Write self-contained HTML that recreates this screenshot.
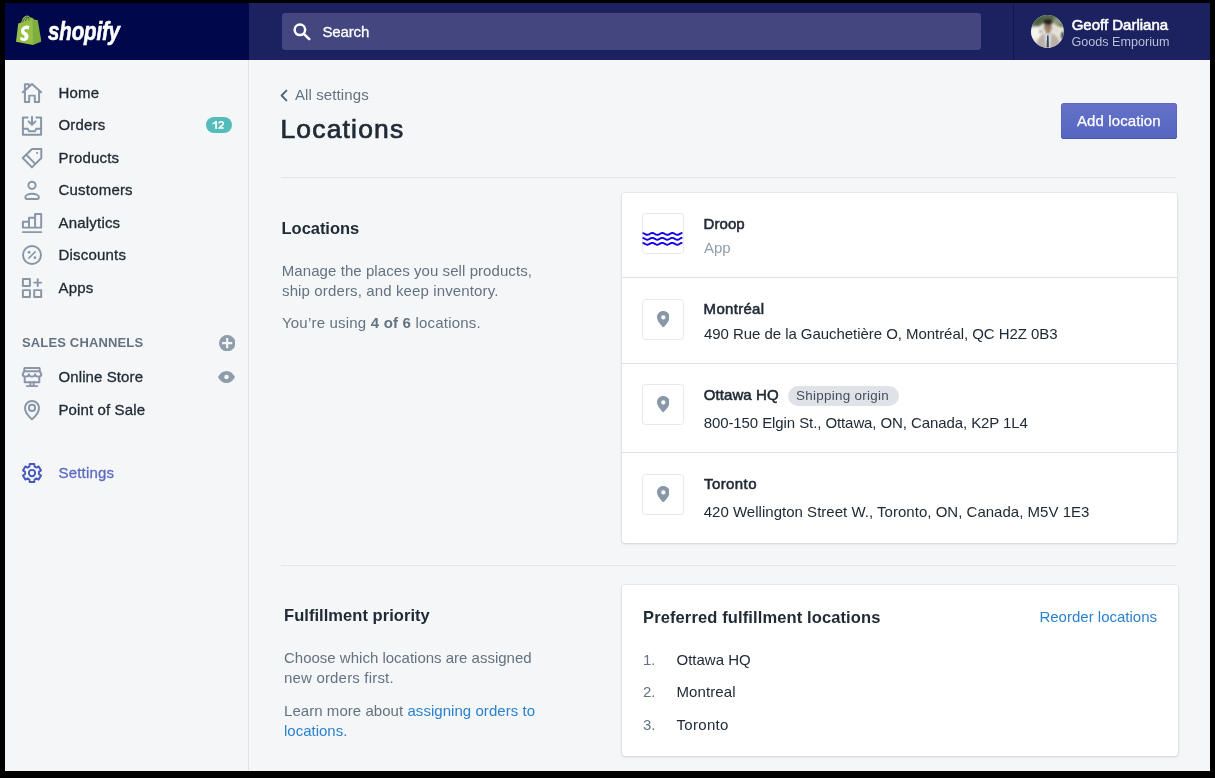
<!DOCTYPE html>
<html>
<head>
<meta charset="utf-8">
<title>Locations</title>
<style>
*{box-sizing:border-box;margin:0;padding:0}
html,body{width:1215px;height:778px;overflow:hidden;background:#000}
body{font-family:"Liberation Sans",sans-serif;color:#212b36;position:relative;font-size:15px}
.abs{position:absolute}
#frame{position:absolute;left:5px;top:3px;width:1205px;height:768px;background:#f4f6f8;overflow:hidden}
/* everything inside frame positioned in page coords via offset wrapper */
#page{will-change:transform;position:absolute;left:-5px;top:-3px;width:1215px;height:778px}
#topL{left:5px;top:3px;width:244px;height:57px;background:#00084b}
#topR{left:249px;top:3px;width:961px;height:57px;background:#1c2260}
#search{left:282px;top:13px;width:699px;height:37px;background:#43467f;border-radius:3px}
#userdiv{left:1013px;top:3px;width:1px;height:57px;background:#11164d}
#sidebar{left:5px;top:60px;width:244px;height:711px;background:#f4f6f8;border-right:1px solid #e1e5e9}
.t{position:absolute;white-space:nowrap;line-height:20px}
.nav{left:58.5px;font-size:15px;color:#212b36;letter-spacing:.2px}
.sub{color:#637381}
.card{position:absolute;background:#fff;border-radius:3px;box-shadow:0 0 0 1px rgba(63,63,68,.05),0 1px 3px 0 rgba(63,63,68,.15)}
.hr{position:absolute;height:1px;background:#dfe3e8}
.ibox{position:absolute;width:41.4px;height:40.8px;border:1.3px solid #e6e9ec;border-radius:3.5px;background:#fff}
.h2{font-size:16.5px;color:#212b36;font-weight:bold}
.b{font-weight:bold}
a{color:#2a82ce;text-decoration:none}

.ic{position:absolute;width:20px;height:20px;overflow:visible}
.ic *{fill:none;stroke:#8896a7;stroke-width:1.95;stroke-linecap:round;stroke-linejoin:round}
.ic .f{fill:#8896a7;stroke:none}
.nav,.med{-webkit-text-stroke:.3px currentColor}
.sb{-webkit-text-stroke:.55px currentColor}
#gear *{stroke:#4858bb}
</style>
</head>
<body>
<div id="frame"><div id="page">

<!-- top bar -->
<div id="topL" class="abs"></div>
<div id="topR" class="abs"></div>
<div id="search" class="abs"></div>
<div id="userdiv" class="abs"></div>
<div class="t med" style="left:322.5px;top:22px;font-size:15px;color:#fff;letter-spacing:-.15px">Search</div>
<div class="t sb" style="left:1071.7px;top:15px;font-size:15px;color:#fff">Geoff Darliana</div>
<div class="t" style="left:1071.5px;top:32px;font-size:12.6px;color:#b9bdd6">Goods Emporium</div>
<svg class="abs" id="avatar" style="left:1030.6px;top:15.1px;width:33px;height:33px" viewBox="0 0 33 33">
<defs><clipPath id="avc"><circle cx="16.5" cy="16.5" r="16.4"/></clipPath><filter id="avb" x="-20%" y="-20%" width="140%" height="140%"><feGaussianBlur stdDeviation=".8"/></filter></defs>
<g clip-path="url(#avc)"><rect width="33" height="33" fill="#e6e4da"/>
<g filter="url(#avb)">
<path d="M-2 -2 H35 V11 C31 13 27 12 24 9 C22 7 12 7 10 10 C7 13 3 11 -2 12 Z" fill="#6b7c5c"/>
<ellipse cx="7" cy="5" rx="7" ry="5" fill="#4f6140"/>
<ellipse cx="17" cy="1.5" rx="7" ry="3" fill="#56684a"/>
<ellipse cx="27" cy="6.5" rx="5" ry="3.5" fill="#8a997b"/>
<ellipse cx="4.5" cy="18" rx="6" ry="6" fill="#f4f3ec"/>
<path d="M5.5 34 C5.5 25 8.5 20.4 13.2 18.8 L17 17.6 L21 18.8 C26 20.4 29.5 25 29.5 34 Z" fill="#b9b1a6"/>
<path d="M13.8 19 L17 17.4 L20 19 L18.8 34 H14.8 Z" fill="#dde3e7"/>
<ellipse cx="17" cy="12.3" rx="3.9" ry="5.1" fill="#a1836b"/>
<rect x="15.2" y="15.8" width="3.6" height="3" fill="#a1836b"/>
<ellipse cx="17.1" cy="6.8" rx="4.6" ry="3.1" fill="#262423"/>
<path d="M13.8 11.4 H20.3" stroke="#5a4a40" stroke-width=".7"/>
<circle cx="24.8" cy="15.4" r="3" fill="#e6ddd5"/>
<ellipse cx="31.8" cy="20.5" rx="1.7" ry="3.8" fill="#3b403b"/>
<circle cx="9.6" cy="16.6" r="1.2" fill="#55618a"/>
</g><path d="M16.1 20.2 H17.6 L17.9 32.6 H15.5 Z" fill="#242c48" opacity=".85"/></g></svg>

<!-- sidebar -->
<div id="sidebar" class="abs"></div>
<div class="t nav" style="top:83px">Home</div>
<div class="t nav" style="top:115px">Orders</div>
<div class="t nav" style="top:148px">Products</div>
<div class="t nav" style="top:180px">Customers</div>
<div class="t nav" style="top:213px">Analytics</div>
<div class="t nav" style="top:245px">Discounts</div>
<div class="t nav" style="top:278px">Apps</div>
<div class="t b" style="left:22px;top:333px;font-size:13px;color:#637381;letter-spacing:.15px">SALES CHANNELS</div>
<div class="t nav" style="top:367px;letter-spacing:.1px">Online Store</div>
<div class="t nav" style="top:400px;letter-spacing:.12px">Point of Sale</div>
<div class="t nav" style="top:463px;color:#5c6ac4">Settings</div>
<div class="abs" style="left:206.4px;top:116.9px;width:25.5px;height:16.3px;border-radius:8.2px;background:#54bcbb"></div>
<svg class="abs" style="left:212.4px;top:121.4px;width:12.4px;height:7.9px" viewBox="0 0 12.4 7.9"><path d="M3.3 0 H5 V7.9 H3.2 V2.2 C2.5 2.8 1.6 3.3 .5 3.6 V2.1 C1.7 1.7 2.7 .9 3.3 0 Z" fill="#fff"/><path d="M7 2.6 C7 .3 11.4 .2 11.4 2.5 C11.4 4.2 7.6 5.6 7.1 7.1 H11.7" fill="none" stroke="#fff" stroke-width="1.55"/></svg>


<!-- nav icons -->
<svg class="ic" style="left:21.8px;top:82.5px" viewBox="0 0 20 20"><path d="M.9 9.3 L10 1 L19.1 9.3"/><path d="M2.9 7.8 V18.9 H7.2 V12.6 H12.8 V18.9 H17.1 V7.8"/><path d="M2.9 6.8 V1.2 H6.9 V3.2"/></svg>
<svg class="ic" style="left:21.8px;top:115.5px" viewBox="0 0 20 20"><path d="M5.6 1.4 H.9 V18.7 H19.1 V1.4 H14.4"/><path d="M10 .8 V8.6 M6.6 5.4 L10 8.8 L13.4 5.4"/><path d="M.9 12.7 H5.7 L6.9 15.2 H13.1 L14.3 12.7 H19.1"/></svg>
<svg class="ic" style="left:21.8px;top:147.5px" viewBox="0 0 20 20"><path d="M10 1 H19.3 V10 L10 19.4 L.7 10 Z"/><path d="M4.3 6.8 L13 15.6"/><circle class="f" cx="15.1" cy="5.1" r="1.1"/></svg>
<svg class="ic" style="left:21.8px;top:180px" viewBox="0 0 20 20"><circle cx="10" cy="5.3" r="3.6"/><path d="M3.3 17.3 C3.3 15.3 6.3 13.7 10.1 13.7 S16.9 15.3 16.9 17.3 C16.9 18.4 16.3 18.9 15.3 18.9 H4.9 C3.9 18.9 3.3 18.4 3.3 17.3 Z"/></svg>
<svg class="ic" style="left:21.8px;top:212.8px" viewBox="0 0 20 20"><path d="M.9 14.6 V8.7 H7 V14.6 M7 8.7 V4.7 H13.1 V14.6 M13.1 4.7 V.9 H19.2 V14.6 H.9"/><path d="M.8 19.1 H19.3"/></svg>
<svg class="ic" style="left:21.8px;top:244.7px" viewBox="0 0 20 20"><circle cx="10" cy="10" r="9"/><path d="M6.9 13.1 L13.1 6.9" style="stroke-width:1.5"/><circle class="f" cx="7.1" cy="7.3" r="1.35"/><circle class="f" cx="12.9" cy="12.7" r="1.35"/></svg>
<svg class="ic" style="left:21.8px;top:277.9px" viewBox="0 0 20 20"><rect x=".9" y=".9" width="7" height="7"/><rect x=".9" y="12.1" width="7" height="6.9"/><rect x="12.2" y="12.1" width="7" height="6.9"/><path d="M15.7 1.1 V8.1 M12.2 4.6 H19.2"/></svg>
<svg class="ic" style="left:22px;top:367.3px" viewBox="0 0 20 20"><rect x="2.3" y=".9" width="15.4" height="3.4" rx=".6"/><path d="M2.3 4.3 L.6 7.3 a3.13 2.3 0 0 0 6.27 0 a3.13 2.3 0 0 0 6.27 0 a3.13 2.3 0 0 0 6.27 0 L17.7 4.3"/><path d="M2.7 9.9 V15.3 H17.3 V9.9"/><path d="M8.4 15.3 V19 M11.6 15.3 V19 M4.8 19.1 H15.2"/></svg>
<svg class="ic" style="left:21.8px;top:399.9px" viewBox="0 0 20 20"><path d="M10 19.2 C10 19.2 3 13.2 3 7.9 a7 7 0 0 1 14 0 C17 13.2 10 19.2 10 19.2 Z"/><circle cx="10" cy="7.9" r="3.1"/></svg>
<svg class="ic" id="gear" style="left:21.8px;top:462.7px" viewBox="0 0 20 20"><path d="M7.49 3.46 L7.66 0.95 L12.34 0.95 L12.51 3.46 L14.41 4.56 L16.67 3.45 L19.01 7.50 L16.91 8.90 L16.91 11.10 L19.01 12.50 L16.67 16.55 L14.41 15.44 L12.51 16.54 L12.34 19.05 L7.66 19.05 L7.49 16.54 L5.59 15.44 L3.33 16.55 L0.99 12.50 L3.09 11.10 L3.09 8.90 L0.99 7.50 L3.33 3.45 L5.59 4.56Z"/><circle cx="10" cy="10" r="3.15"/></svg>
<!-- plus & eye -->
<svg class="abs" style="left:218.7px;top:334.7px;width:16.4px;height:16.4px" viewBox="0 0 16 16"><circle cx="8" cy="8" r="8" fill="#8f9cab"/><path d="M8 3 V13 M3 8 H13" stroke="#f4f6f8" stroke-width="2.1" stroke-linecap="butt"/></svg>
<svg class="abs" style="left:218.4px;top:371.4px;width:17px;height:12px" viewBox="0 0 17 12"><path d="M0 6 C2.2 2 5 0 8.5 0 S14.8 2 17 6 C14.8 10 12 12 8.5 12 S2.2 10 0 6 Z" fill="#8f9cab"/><circle cx="8.5" cy="6" r="2.3" fill="#f4f6f8"/></svg>


<!-- logo -->
<svg class="abs" style="left:15.5px;top:14.8px;width:25.6px;height:30px" viewBox="0 0 25.6 30">
<path d="M5.2 7.6 C6 3.6 8.6 .4 11.4 .5 C12.6 .5 13.3 1.2 13.9 2.2 L16.6 3 L17 3.4 L17 30 L0 26.8 L2.2 8.6 Z" fill="#95bf47"/>
<path d="M16.6 3 L18.6 4.8 L21.7 5.1 L25.4 26.6 L17 30 Z" fill="#7fad3f"/>
<path d="M7.2 7 C7.8 4.2 9.6 2 11.3 1.8 C12 3 12.1 4.6 12.1 5.6 Z" fill="#03094d" opacity=".0"/>
<path d="M6.6 7.3 C7.4 4.3 9.2 1.9 11.2 1.7 M9.6 6.3 C9.9 4.3 10.9 2.6 12.2 2 M12.3 1.9 C12.9 2.9 13.1 4.2 13.1 5.3" stroke="#03094d" stroke-width="1" fill="none" opacity=".55"/>
<path d="M13.3 10.6 L12.4 13.5 C11.7 13.1 10.9 12.9 10.1 12.95 C8.5 13.05 8.5 14.05 8.5 14.3 C8.6 15.7 12.2 16 12.4 19.3 C12.55 21.9 11 23.7 8.8 23.8 C6.2 24 4.7 22.4 4.7 22.4 L5.3 20 C5.3 20 6.8 21.1 7.9 21 C8.7 20.95 8.95 20.3 8.9 19.9 C8.8 18.1 5.8 18.2 5.6 15.2 C5.45 12.7 7.1 10.1 10.8 9.9 C12.3 9.8 13.3 10.6 13.3 10.6 Z" fill="#fff" transform="translate(4.1,10.45) scale(1.09,1.116) translate(-4.7,-9.8)"/>
</svg>
<div class="t" id="wm" style="left:47.6px;top:15.4px;font-size:25.5px;line-height:32px;-webkit-text-stroke:.6px #fff;color:#fff;font-weight:bold;font-style:italic;transform-origin:0 0;transform:scaleX(.805);letter-spacing:-.2px">shopify</div>
<!-- search icon -->
<svg class="abs" style="left:292px;top:21.5px;width:20px;height:20px" viewBox="0 0 20 20"><circle cx="7.9" cy="7.8" r="5.25" fill="none" stroke="#fff" stroke-width="2.5"/><path d="M11.9 11.9 L17.2 17.2" stroke="#fff" stroke-width="2.6" stroke-linecap="round"/></svg>
<!-- chevron -->
<svg class="abs" style="left:279px;top:88.5px;width:10px;height:13px" viewBox="0 0 10 13"><path d="M7.4 1.6 L2.6 6.5 L7.4 11.4" fill="none" stroke="#53647a" stroke-width="1.9" stroke-linecap="round" stroke-linejoin="round"/></svg>
<!-- droop waves -->
<svg class="abs" style="z-index:3;left:642.4px;top:213.2px;width:41.4px;height:41.4px" viewBox="0 0 41.4 41.4"><g fill="none" stroke="#1200e6" stroke-width="1.9"><path d="M0.60 20.00 L1.10 20.09 L1.59 20.27 L2.09 20.50 L2.59 20.78 L3.09 21.07 L3.58 21.34 L4.08 21.56 L4.58 21.73 L5.08 21.81 L5.57 21.81 L6.07 21.71 L6.57 21.54 L7.07 21.31 L7.56 21.04 L8.06 20.75 L8.56 20.48 L9.06 20.25 L9.55 20.08 L10.05 19.99 L10.55 19.99 L11.05 20.08 L11.54 20.25 L12.04 20.48 L12.54 20.75 L13.04 21.04 L13.53 21.31 L14.03 21.54 L14.53 21.71 L15.03 21.81 L15.53 21.81 L16.02 21.73 L16.52 21.56 L17.02 21.33 L17.52 21.06 L18.01 20.78 L18.51 20.50 L19.01 20.27 L19.50 20.09 L20.00 20.00 L20.50 19.99 L21.00 20.07 L21.50 20.23 L21.99 20.45 L22.49 20.72 L22.99 21.01 L23.48 21.28 L23.98 21.52 L24.48 21.70 L24.98 21.80 L25.47 21.81 L25.97 21.74 L26.47 21.58 L26.97 21.36 L27.46 21.09 L27.96 20.81 L28.46 20.53 L28.96 20.29 L29.45 20.11 L29.95 20.00 L30.45 19.98 L30.95 20.06 L31.45 20.21 L31.94 20.43 L32.44 20.69 L32.94 20.98 L33.43 21.26 L33.93 21.50 L34.43 21.69 L34.93 21.79 L35.43 21.82 L35.92 21.75 L36.42 21.60 L36.92 21.38 L37.41 21.12 L37.91 20.84 L38.41 20.56 L38.91 20.31 L39.40 20.12 L39.90 20.01 L40.40 19.98"/><path d="M0.60 24.90 L1.10 24.99 L1.59 25.17 L2.09 25.40 L2.59 25.68 L3.09 25.97 L3.58 26.24 L4.08 26.46 L4.58 26.63 L5.08 26.71 L5.57 26.71 L6.07 26.61 L6.57 26.44 L7.07 26.21 L7.56 25.94 L8.06 25.65 L8.56 25.38 L9.06 25.15 L9.55 24.98 L10.05 24.89 L10.55 24.89 L11.05 24.98 L11.54 25.15 L12.04 25.38 L12.54 25.65 L13.04 25.94 L13.53 26.21 L14.03 26.44 L14.53 26.61 L15.03 26.71 L15.53 26.71 L16.02 26.63 L16.52 26.46 L17.02 26.23 L17.52 25.96 L18.01 25.68 L18.51 25.40 L19.01 25.17 L19.50 24.99 L20.00 24.90 L20.50 24.89 L21.00 24.97 L21.50 25.13 L21.99 25.35 L22.49 25.62 L22.99 25.91 L23.48 26.18 L23.98 26.42 L24.48 26.60 L24.98 26.70 L25.47 26.71 L25.97 26.64 L26.47 26.48 L26.97 26.26 L27.46 25.99 L27.96 25.71 L28.46 25.43 L28.96 25.19 L29.45 25.01 L29.95 24.90 L30.45 24.88 L30.95 24.96 L31.45 25.11 L31.94 25.33 L32.44 25.59 L32.94 25.88 L33.43 26.16 L33.93 26.40 L34.43 26.59 L34.93 26.69 L35.43 26.72 L35.92 26.65 L36.42 26.50 L36.92 26.28 L37.41 26.02 L37.91 25.74 L38.41 25.46 L38.91 25.21 L39.40 25.02 L39.90 24.91 L40.40 24.88"/><path d="M0.60 29.90 L1.10 29.99 L1.59 30.17 L2.09 30.40 L2.59 30.68 L3.09 30.97 L3.58 31.24 L4.08 31.46 L4.58 31.63 L5.08 31.71 L5.57 31.71 L6.07 31.61 L6.57 31.44 L7.07 31.21 L7.56 30.94 L8.06 30.65 L8.56 30.38 L9.06 30.15 L9.55 29.98 L10.05 29.89 L10.55 29.89 L11.05 29.98 L11.54 30.15 L12.04 30.38 L12.54 30.65 L13.04 30.94 L13.53 31.21 L14.03 31.44 L14.53 31.61 L15.03 31.71 L15.53 31.71 L16.02 31.63 L16.52 31.46 L17.02 31.23 L17.52 30.96 L18.01 30.68 L18.51 30.40 L19.01 30.17 L19.50 29.99 L20.00 29.90 L20.50 29.89 L21.00 29.97 L21.50 30.13 L21.99 30.35 L22.49 30.62 L22.99 30.91 L23.48 31.18 L23.98 31.42 L24.48 31.60 L24.98 31.70 L25.47 31.71 L25.97 31.64 L26.47 31.48 L26.97 31.26 L27.46 30.99 L27.96 30.71 L28.46 30.43 L28.96 30.19 L29.45 30.01 L29.95 29.90 L30.45 29.88 L30.95 29.96 L31.45 30.11 L31.94 30.33 L32.44 30.59 L32.94 30.88 L33.43 31.16 L33.93 31.40 L34.43 31.59 L34.93 31.69 L35.43 31.72 L35.92 31.65 L36.42 31.50 L36.92 31.28 L37.41 31.02 L37.91 30.74 L38.41 30.46 L38.91 30.21 L39.40 30.02 L39.90 29.91 L40.40 29.88"/></g></svg>
<!-- pins -->
<svg class="abs" style="z-index:3;left:656.6px;top:311px;width:12.7px;height:16.4px" viewBox="0 0 12.7 16.4"><path d="M6.35 0 C2.8 0 0 2.75 0 6.2 C0 10.6 6.35 16.4 6.35 16.4 S12.7 10.6 12.7 6.2 C12.7 2.75 9.9 0 6.35 0 Z M6.35 8.6 a2.15 2.15 0 1 1 0 -4.3 a2.15 2.15 0 0 1 0 4.3 Z" fill="#8a97a8" fill-rule="evenodd"/></svg>
<svg class="abs" style="z-index:3;left:656.6px;top:396.2px;width:12.7px;height:16.4px" viewBox="0 0 12.7 16.4"><path d="M6.35 0 C2.8 0 0 2.75 0 6.2 C0 10.6 6.35 16.4 6.35 16.4 S12.7 10.6 12.7 6.2 C12.7 2.75 9.9 0 6.35 0 Z M6.35 8.6 a2.15 2.15 0 1 1 0 -4.3 a2.15 2.15 0 0 1 0 4.3 Z" fill="#8a97a8" fill-rule="evenodd"/></svg>
<svg class="abs" style="z-index:3;left:656.6px;top:486px;width:12.7px;height:16.4px" viewBox="0 0 12.7 16.4"><path d="M6.35 0 C2.8 0 0 2.75 0 6.2 C0 10.6 6.35 16.4 6.35 16.4 S12.7 10.6 12.7 6.2 C12.7 2.75 9.9 0 6.35 0 Z M6.35 8.6 a2.15 2.15 0 1 1 0 -4.3 a2.15 2.15 0 0 1 0 4.3 Z" fill="#8a97a8" fill-rule="evenodd"/></svg>

<!-- main header -->
<div class="t sub" style="left:295px;top:85px;font-size:15px;letter-spacing:.1px">All settings</div>
<div class="t" style="left:280.4px;top:111px;font-size:26.5px;line-height:36px;color:#212b36;letter-spacing:1.18px;-webkit-text-stroke:.7px #212b36">Locations</div>
<div class="abs" style="left:1060.5px;top:102.8px;width:116.7px;height:36.4px;background:linear-gradient(#6472c8,#5665c1);border-radius:3.5px;box-shadow:inset 0 -1px 0 #4654b4, inset 0 0 0 .5px #4f5ebc"></div>
<div class="t" style="left:1077px;top:111px;font-size:15px;color:#fff;letter-spacing:.1px;-webkit-text-stroke:.25px #fff">Add location</div>
<div class="hr" style="left:280.6px;top:177px;width:895.8px;background:#e2e6ea"></div>

<!-- section 1 -->
<div class="t h2" style="left:281.6px;top:218px;letter-spacing:-.05px">Locations</div>
<div class="t sub" style="left:281.8px;top:261px;letter-spacing:.07px">Manage the places you sell products,</div>
<div class="t sub" style="left:282px;top:281px;letter-spacing:.13px">ship orders, and keep inventory.</div>
<div class="t sub" style="left:282px;top:313px;letter-spacing:.2px">You’re using <b>4 of 6</b> locations.</div>

<div class="card" style="left:621.8px;top:193px;width:555.6px;height:349.8px"></div>
<div class="hr" style="left:621.8px;top:277.4px;width:555.6px"></div>
<div class="hr" style="left:621.8px;top:362.5px;width:555.6px"></div>
<div class="hr" style="left:621.8px;top:452.4px;width:555.6px"></div>
<div class="ibox" style="left:642.3px;top:213.1px;height:41.4px"></div>
<div class="ibox" style="left:642.3px;top:299px"></div>
<div class="ibox" style="left:642.3px;top:384.2px"></div>
<div class="ibox" style="left:642.3px;top:474px"></div>

<div class="t sb" style="left:703.6px;top:214px;letter-spacing:.05px">Droop</div>
<div class="t" style="left:704px;top:238px;color:#919eab">App</div>
<div class="t sb" style="left:703.6px;top:299px;letter-spacing:.3px">Montréal</div>
<div class="t" style="left:704px;top:324px;letter-spacing:-.05px">490 Rue de la Gauchetière O, Montréal, QC H2Z 0B3</div>
<div class="t sb" style="left:703.8px;top:385px;letter-spacing:.08px">Ottawa HQ</div>
<div class="abs" style="left:787.7px;top:385.5px;width:111px;height:20px;border-radius:10px;background:#dfe3e8"></div>
<div class="t" style="left:796px;top:386px;font-size:13.4px;color:#454f5b;letter-spacing:.3px">Shipping origin</div>
<div class="t" style="left:703.7px;top:413px;letter-spacing:-.09px">800-150 Elgin St., Ottawa, ON, Canada, K2P 1L4</div>
<div class="t sb" style="left:704px;top:474px;letter-spacing:.42px">Toronto</div>
<div class="t" style="left:703.7px;top:502px;letter-spacing:.02px">420 Wellington Street W., Toronto, ON, Canada, M5V 1E3</div>

<div class="hr" style="left:280.6px;top:565px;width:895.8px;background:#e2e6ea"></div>

<!-- section 2 -->
<div class="t h2" style="left:284px;top:605px;letter-spacing:.05px">Fulfillment priority</div>
<div class="t sub" style="left:284px;top:648px">Choose which locations are assigned</div>
<div class="t sub" style="left:284px;top:668px;letter-spacing:.18px">new orders first.</div>
<div class="t sub" style="left:284px;top:701px;letter-spacing:.05px">Learn more about <a>assigning orders to</a></div>
<div class="t sub" style="left:284px;top:721px"><a>locations.</a></div>

<div class="card" style="left:621.8px;top:585px;width:556.4px;height:170.8px"></div>
<div class="t h2" style="left:643px;top:607px;letter-spacing:.12px">Preferred fulfillment locations</div>
<div class="t" style="right:58px;top:607px"><a>Reorder locations</a></div>
<div class="t sub" style="left:643px;top:650px">1.</div>
<div class="t" style="left:676.5px;top:650px">Ottawa HQ</div>
<div class="t sub" style="left:643px;top:682px">2.</div>
<div class="t" style="left:676.5px;top:682px;letter-spacing:.1px">Montreal</div>
<div class="t sub" style="left:643px;top:715px">3.</div>
<div class="t" style="left:676.5px;top:715px;letter-spacing:.3px">Toronto</div>

</div></div>
</body>
</html>
